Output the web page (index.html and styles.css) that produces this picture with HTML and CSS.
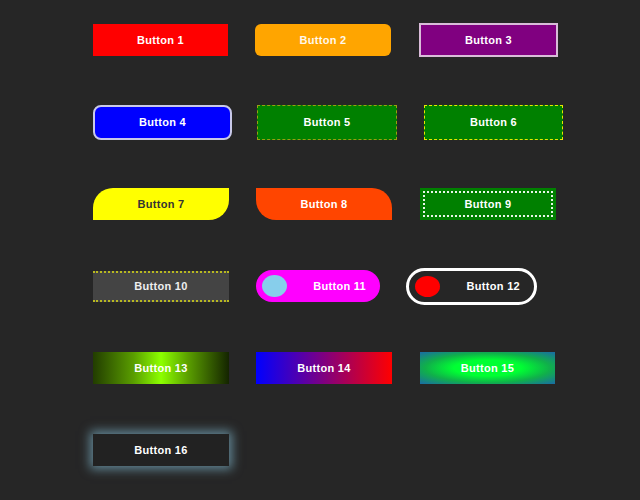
FILE: index.html
```html
<!DOCTYPE html>
<html>
<head>
<meta charset="utf-8">
<link rel="stylesheet" href="styles.css">
</head>
<body>
<div class="board">
  <div class="row">
    <button class="btn b1">Button 1</button>
    <button class="btn b2">Button 2</button>
    <button class="btn b3">Button 3</button>
  </div>
  <div class="row">
    <button class="btn b4">Button 4</button>
    <button class="btn b5">Button 5</button>
    <button class="btn b6">Button 6</button>
  </div>
  <div class="row">
    <button class="btn b7">Button 7</button>
    <button class="btn b8">Button 8</button>
    <button class="btn b9">Button 9</button>
  </div>
  <div class="row">
    <button class="btn b10">Button 10</button>
    <button class="btn b11"><span class="dot dot-blue"></span><span class="label">Button 11</span></button>
    <button class="btn b12"><span class="dot dot-red"></span><span class="label">Button 12</span></button>
  </div>
  <div class="row">
    <button class="btn b13">Button 13</button>
    <button class="btn b14">Button 14</button>
    <button class="btn b15">Button 15</button>
  </div>
  <div class="row">
    <button class="btn b16">Button 16</button>
  </div>
</div>
</body>
</html>
```
FILE: styles.css
```css
html, body {
  margin: 0;
  padding: 0;
  background: #262626;
  height: 100%;
}
.board {
  display: flex;
  flex-direction: column;
  gap: 50px;
  padding: 24px 0 0 93px;
}
.row {
  display: flex;
  align-items: center;
  gap: 27px;
  height: 32px;
}
.btn {
  box-sizing: border-box;
  width: 135px;
  height: 32px;
  flex: none;
  border: none;
  padding: 0;
  margin: 0;
  font-family: "Liberation Sans", Arial, sans-serif;
  font-weight: bold;
  font-size: 11px;
  letter-spacing: 0.3px;
  color: #fff;
  display: flex;
  align-items: center;
  justify-content: center;
}
.b1 { background: #ff0000; }
.b2 { background: #ffa500; border-radius: 6px; width: 136px; color: #fff8ea; }
.b3 { background: #800080; border: 2px solid #d9bcd9; width: 139px; height: 34px; margin-left: 1px; }
.b4 { background: #0000ff; border: 2px solid #c8c8e8; border-radius: 8px; width: 139px; height: 35px; }
.b5 { background: #008000; border: 1px dashed #9aa010; width: 140px; height: 35px; margin-left: -2px; }
.b6 { background: #008000; border: 1px dashed #e8e800; width: 139px; height: 35px; margin-left: 0; }
.b7 { background: #ffff00; color: #333; border-radius: 20px 0 20px 0; width: 136px; }
.b8 { background: #ff4500; border-radius: 0 20px 0 20px; width: 136px; }
.b9 { background: #008000; outline: 2px dotted #e8f5e8; outline-offset: -5px; width: 136px; margin-left: 1px; }
.b10 {
  background: #444;
  border-top: 2px dotted #b8b820;
  border-bottom: 2px dotted #b8b820;
  width: 136px;
  height: 31px;
  color: #eee;
}
.b11 {
  background: #ff00ff;
  border-radius: 16px;
  width: 124px;
  justify-content: space-between;
  padding: 0 14px 0 6px;
}
.b12 {
  background: #262626;
  border: 3px solid #fff;
  border-radius: 20px;
  width: 131px;
  height: 37px;
  justify-content: space-between;
  padding: 0 14px 0 6px;
  margin-left: -1px;
}
.dot {
  display: block;
  border-radius: 50%;
}
.dot-blue { width: 25px; height: 22px; background: #87ceeb; }
.dot-red { width: 25px; height: 21px; background: #ff0000; }
.b13 { background: linear-gradient(90deg, #223d00 0%, #5a9e00 30%, #8cff00 50%, #5a9e00 70%, #142400 100%); width: 136px; }
.b14 { background: linear-gradient(90deg, #0000ff, #ff0000); width: 136px; }
.b15 { background: radial-gradient(ellipse at center, #00ff33 35%, #10b04a 65%, #1a6aa6 100%); width: 135px; margin-left: 1px; }
.b16 {
  background: #222;
  width: 136px;
  box-shadow: 0 0 10px 3px rgba(120, 170, 190, 0.75);
}
```
